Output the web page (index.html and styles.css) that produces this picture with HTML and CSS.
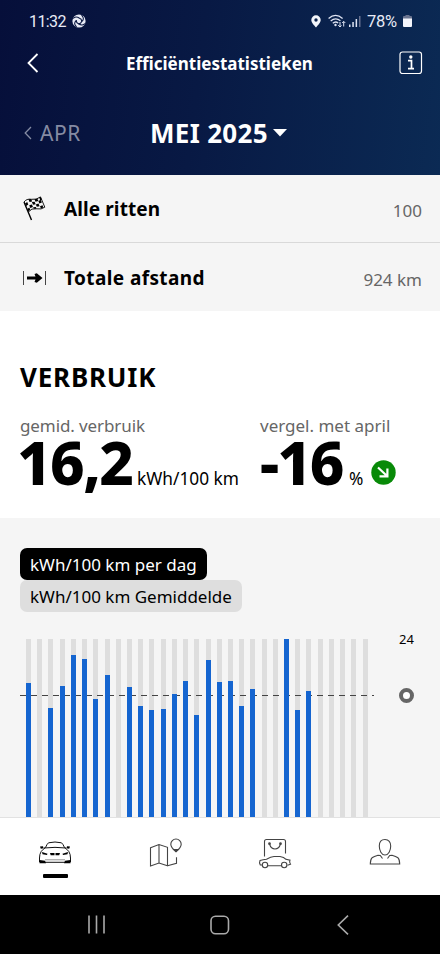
FILE: index.html
```html
<!DOCTYPE html>
<html lang="nl">
<head>
  <meta charset="UTF-8">
  <meta name="viewport" content="width=device-width, initial-scale=1.0">
  <title>Efficiëntiestatistieken</title>
  <link rel="stylesheet" href="styles.css">
</head>
<body>
  <div class="app">
    <!-- Header -->
    <header class="header">
      <div class="status">
        <span class="time">11:32</span>
        <svg class="swirl" width="14" height="14" viewBox="0 0 14 14">
          <circle cx="7" cy="7" r="6.6" fill="#e8ebf6"/>
          <g fill="none" stroke="#0a1741" stroke-width="1.1" stroke-linecap="round">
            <path d="M1.500 4.200Q4 1.800 7.500 4.300Q9.500 4.800 9.700 7"/>
            <path d="M4.300 12.600Q1 9.500 4.300 6.500"/>
            <path d="M9.800 1.300Q13 5 9.700 7.500Q8.800 9.800 6.700 9.800"/>
            <path d="M12.600 9.800Q10 12.300 6.500 9.800Q4.300 9 4.300 6.700"/>
          </g>
        </svg>
        <div class="status-right">
          <svg width="10" height="13" viewBox="0 0 10 13">
            <path fill="#f3f5fb" fill-rule="evenodd" d="M5 .3A4.700 4.700 0 0 0 .3 5C.3 8 3.300 10.200 5 12.500C6.700 10.200 9.700 8 9.700 5A4.700 4.700 0 0 0 5 .3ZM5 3.300a1.700 1.700 0 1 1 0 3.400a1.700 1.700 0 0 1 0-3.400Z"/>
          </svg>
          <svg class="wifi" width="18" height="14" viewBox="0 0 18 14">
            <g fill="none" stroke="#dfe4f3" stroke-width="1.300">
              <path d="M.6 4.500Q7.500-1.700 14.600 4.500"/>
              <path d="M2.700 7Q7.500 2.800 12.400 6.700"/>
              <path d="M4.800 9.300Q7.500 6.800 10.200 9"/>
              <path d="M12 8v4.800M10.200 11.200l1.800 1.800 1.500-1.500M15.700 12.500V7.500M14.200 9l1.500-1.600L17.300 9" stroke-width="1"/>
            </g>
            <circle cx="7.500" cy="11" r="1.200" fill="#dfe4f3"/>
          </svg>
          <svg class="signal" width="12" height="12" viewBox="0 0 12 12">
            <path d="M0 9.500h1.500V12H0zM3.300 7h1.500v5H3.300zM6.600 4h1.500v8H6.600z" fill="#dfe4f3"/>
            <path d="M10 1h1.500v11H10z" fill="#66708f"/>
          </svg>
          <span class="percent">78%</span>
          <svg class="battery" width="9" height="12" viewBox="0 0 9 12">
            <path d="M2.500 0h4v1h1.500q1 0 1 1v2H0V2q0-1 1-1h1.500z" fill="#69738f"/>
            <path d="M0 3.500h9v7.500q0 1-1 1H1q-1 0-1-1z" fill="#f3f5fb"/>
          </svg>
        </div>
      </div>

      <div class="titlebar">
        <svg width="12" height="20" viewBox="0 0 12 20">
          <path d="M10.500 1L1.500 10l9 9" fill="none" stroke="#fff" stroke-width="1.800"/>
        </svg>
        <h1 class="title">Efficiëntiestatistieken</h1>
        <svg width="24" height="24" viewBox="0 0 24 24">
          <rect x="1" y="1" width="21.500" height="21.500" rx="2.500" fill="none" stroke="#fff" stroke-width="1.200"/>
          <circle cx="11.800" cy="6" r="1.700" fill="#fff"/>
          <path d="M9 9.700h3.500v7.500M9 17.700h6" fill="none" stroke="#fff" stroke-width="1.700"/>
        </svg>
      </div>

      <div class="months">
        <svg width="8" height="14" viewBox="0 0 8 14">
          <path d="M7 1L1.200 7L7 13" fill="none" stroke="#858ba3" stroke-width="1.300"/>
        </svg>
        <span class="prev">APR</span>
        <span class="current">MEI 2025</span>
        <svg class="caret" width="16" height="8" viewBox="0 0 16 8">
          <path d="M1 0h14L8 7.500z" fill="#fff"/>
        </svg>
      </div>
    </header>

    <!-- Totals -->
    <div class="row">
      <svg class="row-icon" width="24" height="26" viewBox="0 0 24 26">
        <path d="M1 6L8.500 24" fill="none" stroke="#000" stroke-width="1.400"/>
        <path d="M1 6Q3.500 2.500 8.500 3.300T17.500.9L21.800 11.200Q18.500 13.800 13.500 12.800T5.300 16" fill="none" stroke="#000" stroke-width=".9"/>
        <path d="M5.500 3.200l2.700-.3 1 2.600-2.700.6zM11.500 3.200l2.800-.8 1.100 2.500-2.900.8zM2 7.500l2.200-1.600 1.100 2.500-2.200 1.700zM8.900 6l2.700-.2 1.100 2.500-2.700.4zM15.400 5l2.400-1.200 1.100 2.600-2.500 1.200zM6.200 9.200l2.700-.7 1.100 2.600-2.700.9zM12.800 8.400l2.700-.8 1.100 2.700-2.800.4zM4.300 13l2-1.500 1 2.200-2 1.600zM10.100 11.200l2.800-.2.700 1.800-2.800-.1zM17 10.200l2.500-1 .9 2.200-2.500 1zM16.200 1.500l1.400-.6 1.200 2.600-1.600.7z" fill="#000"/>
      </svg>
      <span class="row-label ritten">Alle ritten</span>
      <span class="row-value">100</span>
    </div>
    <div class="row">
      <svg class="row-icon" width="24" height="14" viewBox="0 0 24 14">
        <path d="M.5 0v14M22.500 0v14" stroke="#444" stroke-width="1"/>
        <path d="M4 5.500h8.500L11.500 3 13.800 2.200 19.500 7l-5.700 4.800L11.500 11l1-2.500H4z" fill="#000"/>
      </svg>
      <span class="row-label afstand">Totale afstand</span>
      <span class="row-value">924 km</span>
    </div>

    <!-- Consumption -->
    <section class="usage">
      <h2 class="usage-title">VERBRUIK</h2>
      <div class="stats">
        <div class="stat">
          <div class="stat-label">gemid. verbruik</div>
          <div class="stat-line"><span class="number">16,2</span><span class="unit">kWh/100 km</span></div>
        </div>
        <div class="stat">
          <div class="stat-label compare">vergel. met april</div>
          <div class="stat-line">
            <span class="number minus">-16</span><span class="unit pct">%</span>
            <svg class="trend" width="25" height="25" viewBox="0 0 25 25">
              <circle cx="12.500" cy="12.500" r="12.200" fill="#088a08"/>
              <path d="M7 7.500l8.500 8M8.500 16.400h7.900V8.500" fill="none" stroke="#fff" stroke-width="2.200"/>
            </svg>
          </div>
        </div>
      </div>
    </section>

    <!-- Chart -->
    <section class="chart-section">
      <div class="legend dark">kWh/100 km per dag</div>
      <div class="legend light">kWh/100 km Gemiddelde</div>
      <div class="chart">
        <div class="bars" id="bars"></div>
        <svg class="average" width="356" height="1" viewBox="0 0 356 1">
          <path d="M0 .5h354" stroke="#444" stroke-width="1" stroke-dasharray="6 5"/>
        </svg>
        <div class="axis">
          <span class="axis-max">24</span>
          <span class="axis-ring"></span>
        </div>
      </div>
    </section>

    <!-- App tabs -->
    <nav class="tabs">
      <div class="tab active">
        <svg width="34" height="24" viewBox="0 0 34 24" fill="none" stroke="#111" stroke-width="1">
          <path d="M7.500 6.500Q9 3 10.500 1.800Q17 .2 23.500 1.800Q25 3 26.500 6.500M6 7Q17 5.700 28 7M7.500 6.500Q4.800 8.300 3.200 10.500Q1.500 13 1.500 17v4M26.500 6.500Q29.200 8.300 30.800 10.500Q32.500 13 32.500 17v4M7 21.300h20"/>
          <path d="M7 18.800h20" stroke="#777" stroke-width=".8"/>
          <path d="M2 5.500l3-.3.600 2-2.800.6zM32 5.500l-3-.3-.6 2 2.800.6zM4 11l5.500 1.700-.5 1.300-4.500-.7zM30 11l-5.500 1.700.5 1.300 4.500-.7zM12 12h4.500v2.200h-3.800zM17.500 12H22l-.8 2.200h-3.700zM1.500 19l5.500.7 1 2.500H1.500zM32.500 19l-5.500.7-1 2.500h6.500z" fill="#000" stroke="none"/>
        </svg>
        <span class="marker"></span>
      </div>
      <div class="tab">
        <svg width="34" height="30" viewBox="0 0 34 30" fill="none" stroke="#444" stroke-width="1.100">
          <path d="M2.500 9.800L11 6.500l8.500 2.800v18.500L11 25 2.500 28zM11 6.500V25M19.500 27.800l9-2.500v-6"/>
          <path d="M28 13.500Q22.800 9.600 22.800 6.200a5.200 5.200 0 0 1 10.400 0Q33.200 9.600 28 13.500z"/>
          <path d="M24.500 11h7L28 14.500z" fill="#444" stroke="none"/>
        </svg>
      </div>
      <div class="tab">
        <svg width="34" height="31" viewBox="0 0 34 31" fill="none" stroke="#444" stroke-width="1.100">
          <path d="M6.500 18.500V3.500q0-2 2-2h17q2 0 2 2v12M11.500 6Q13 11 17 11t5.500-5"/>
          <circle cx="11.500" cy="5.700" r=".8" fill="#444"/><circle cx="22.500" cy="5.700" r=".8" fill="#444"/>
          <path d="M4 27H2.300Q1 24.500 2 22.500Q5 21.500 8.500 21.300Q13 18.700 16 18.500h6Q26 19 28 21.300l4 .8q-1 2 .5 4.200l-3 1M9.700 27.700H23.500"/>
          <circle cx="7" cy="27" r="2.700"/><circle cx="26.200" cy="27" r="2.700"/>
        </svg>
      </div>
      <div class="tab">
        <svg width="32" height="28" viewBox="0 0 32 28" fill="none" stroke="#444" stroke-width="1.100">
          <path d="M16 1.500C12.200 1.500 10.300 4.200 10.300 8C10.300 12.500 12.500 17 16 17S21.700 12.500 21.700 8C21.700 4.200 19.800 1.500 16 1.500z"/>
          <path d="M13.500 20.500L11.300 17.500 9 17.200Q5 18.300 3 19.800Q1.300 21.500 1.300 26H30.700Q30.700 21.500 29 19.800Q27 18.300 23 17.200L20.700 17.500 18.500 20.500"/>
        </svg>
      </div>
    </nav>

    <!-- Android navigation -->
    <nav class="system">
      <svg width="18" height="19" viewBox="0 0 18 19"><path d="M2 .5v18M9.500 .5v18M17 .5v18" stroke="#aaa" stroke-width="1.600"/></svg>
      <svg width="20" height="20" viewBox="0 0 20 20"><rect x="1" y="1.200" width="17.500" height="17.600" rx="4.500" fill="none" stroke="#aaa" stroke-width="1.600"/></svg>
      <svg width="12" height="20" viewBox="0 0 12 20"><path d="M11 .7L1.300 10l9.700 9.300" fill="none" stroke="#aaa" stroke-width="1.600"/></svg>
    </nav>
  </div>

  <script>
    // Bar height in pixels for each day of the month, 0 = no trips
    const days = [134, 0, 109, 131, 162, 158, 118, 142, 0, 130, 111, 107, 108, 123, 136, 102,
      157, 135, 136, 111, 128, 0, 0, 178, 107, 126, 0, 0, 0, 0, 0];
    const bars = document.getElementById('bars');

    days.forEach(height => {
      const track = document.createElement('div');
      track.className = 'track';
      const bar = document.createElement('div');
      bar.className = 'bar';
      bar.style.height = height + 'px';
      track.appendChild(bar);
      bars.appendChild(track);
    });
  </script>
</body>
</html>
```
FILE: styles.css
```css
* {
  box-sizing: border-box;
}

body {
  margin: 0;
  font-family: 'Noto Sans', sans-serif;
  color: #000;
  background: #fff;
}

svg {
  display: block;
  flex: none;
}

.app {
  width: 440px;
  height: 954px;
  display: flex;
  flex-direction: column;
  overflow: hidden;
  white-space: nowrap;
}

/* Header */
.header {
  height: 175px;
  flex: none;
  background: linear-gradient(97deg, #060f3a 0%, #081944 45%, #0b2a54 100%);
  color: #fff;
}

.status {
  height: 42px;
  padding: 0 28px 0 29px;
  display: flex;
  align-items: center;
  font-family: Roboto, sans-serif;
  font-size: 16px;
  color: #e8ebf6;
}

.time {
  width: 43px;
  letter-spacing: -0.6px;
}

.status-right {
  margin-left: auto;
  display: flex;
  align-items: center;
}

.wifi {
  margin-left: 7px;
}

.signal {
  margin-left: 3px;
}

.percent {
  width: 34px;
  margin-left: 6px;
  font-size: 16.5px;
  letter-spacing: -0.3px;
}

.battery {
  margin-left: 2px;
}

.titlebar {
  height: 42px;
  padding: 0 17px 0 27px;
  display: flex;
  align-items: center;
}

.title {
  width: 188px;
  margin: 0 auto 0 87px;
  font-size: 17px;
  font-weight: 700;
}

.months {
  height: 98px;
  padding-left: 24px;
  display: flex;
  align-items: center;
}

.prev {
  width: 118px;
  padding-left: 8px;
  font-size: 21px;
  letter-spacing: 0.6px;
  color: #858ba3;
}

.current {
  width: 120px;
  font-size: 26px;
  font-weight: 700;
  letter-spacing: 0.3px;
}

.caret {
  margin-left: 2px;
}

/* Total rows */
.row {
  height: 68px;
  padding: 0 18px 0 23px;
  flex: none;
  display: flex;
  align-items: center;
  background: #f5f5f5;
  border-bottom: 1px solid #d9d9d9;
}

.row + .row {
  padding-top: 2px;
  border-bottom: none;
}

.row-icon {
  margin-right: 17px;
}

.row-label {
  font-size: 19px;
  font-weight: 700;
  letter-spacing: 0.1px;
}

.afstand {
  letter-spacing: 0.4px;
}

.row-value {
  margin-left: auto;
  padding-top: 3px;
  font-size: 17px;
  color: #666;
}

/* Consumption */
.usage {
  height: 207px;
  padding: 47px 20px 0;
  flex: none;
}

.usage-title {
  height: 38px;
  margin: 0 0 20px;
  font-size: 26px;
  line-height: 38px;
  font-weight: 700;
  letter-spacing: 0.8px;
}

.stats {
  display: grid;
  grid-template-columns: 240px 1fr;
}

.stat-label {
  height: 20px;
  font-size: 17px;
  line-height: 20px;
  letter-spacing: -0.1px;
  color: #666;
}

.compare {
  letter-spacing: 0;
}

.stat-line {
  height: 52px;
  display: flex;
  align-items: baseline;
}

.number {
  width: 120px;
  margin-left: -3px;
  font-size: 60px;
  line-height: 52px;
  font-weight: 800;
  letter-spacing: -1.6px;
}

.minus {
  width: 89px;
  margin-left: 0;
  letter-spacing: -2px;
}

.unit {
  font-size: 17.3px;
}

.trend {
  margin: 0 0 3px 8px;
  align-self: flex-end;
}

/* Chart */
.chart-section {
  height: 299px;
  padding: 30px 20px 0;
  flex: none;
  background: #f5f5f5;
}

.legend {
  height: 32px;
  padding: 0 10px;
  border-radius: 7px;
  font-size: 17px;
  line-height: 34px;
}

.legend.dark {
  width: 187px;
  color: #fff;
  background: #000;
}

.legend.light {
  width: 222px;
  background: #dedede;
}

.chart {
  position: relative;
  height: 178px;
  margin-top: 27px;
  display: flex;
}

.bars {
  width: 348px;
  padding-left: 6px;
  display: flex;
  justify-content: space-between;
}

.track {
  width: 5px;
  display: flex;
  align-items: flex-end;
  background: #dedede;
}

/* Blue bars sit on top of the average line */
.bar {
  position: relative;
  z-index: 1;
  width: 5px;
  background: #1565d0;
}

.average {
  position: absolute;
  left: 0;
  top: 56px;
}

.axis {
  margin-left: 31px;
  display: flex;
  flex-direction: column;
  align-items: center;
}

.axis-max {
  height: 41px;
  margin-top: -8px;
  font-size: 13px;
  line-height: 16px;
}

.axis-ring {
  width: 15px;
  height: 15px;
  margin-top: 16px;
  border: 4px solid #666;
  border-radius: 50%;
  background: #fff;
}

/* App tabs */
.tabs {
  height: 78px;
  flex: none;
  display: grid;
  grid-template-columns: repeat(4, 110px);
  border-top: 1px solid #e2e2e2;
  background: #fff;
}

.tab {
  padding-top: 20px;
  display: flex;
  flex-direction: column;
  align-items: center;
}

.tab.active {
  padding-top: 23px;
}

.marker {
  width: 25px;
  height: 4px;
  margin-top: 9px;
  border-radius: 1px;
  background: #000;
}

/* Android navigation */
.system {
  height: 59px;
  padding: 0 91px 0 87px;
  flex: none;
  display: flex;
  align-items: center;
  gap: 105px;
  background: #000;
}

.system svg:last-child {
  margin-left: 2px;
}
```
